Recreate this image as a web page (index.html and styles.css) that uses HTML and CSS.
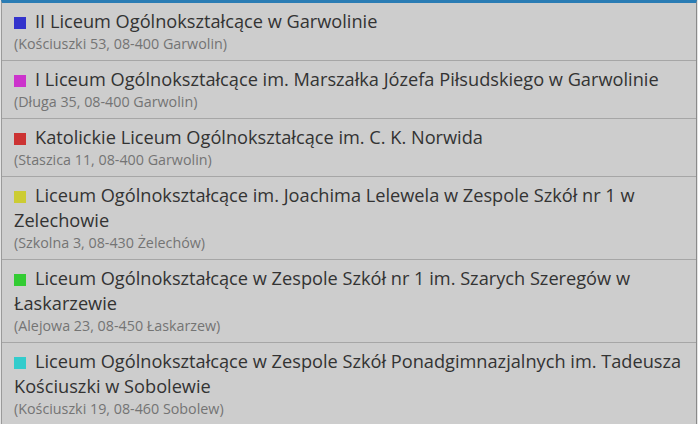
FILE: index.html
```html
<!DOCTYPE html>
<html lang="pl">
<head>
<meta charset="utf-8">
<link rel="stylesheet" href="styles.css">
</head>
<body>
<div class="list">
  <div class="item">
    <div class="title"><span class="sq c1"></span>II Liceum Ogólnokształcące w Garwolinie</div>
    <div class="addr">(Kościuszki 53, 08-400 Garwolin)</div>
  </div>
  <div class="item">
    <div class="title"><span class="sq c2"></span>I Liceum Ogólnokształcące im. Marszałka Józefa Piłsudskiego w Garwolinie</div>
    <div class="addr">(Długa 35, 08-400 Garwolin)</div>
  </div>
  <div class="item">
    <div class="title"><span class="sq c3"></span>Katolickie Liceum Ogólnokształcące im. C. K. Norwida</div>
    <div class="addr">(Staszica 11, 08-400 Garwolin)</div>
  </div>
  <div class="item">
    <div class="title"><span class="sq c4"></span>Liceum Ogólnokształcące im. Joachima Lelewela w Zespole Szkół nr 1 w Zelechowie</div>
    <div class="addr">(Szkolna 3, 08-430 Żelechów)</div>
  </div>
  <div class="item">
    <div class="title"><span class="sq c5"></span>Liceum Ogólnokształcące w Zespole Szkół nr 1 im. Szarych Szeregów w Łaskarzewie</div>
    <div class="addr">(Alejowa 23, 08-450 Łaskarzew)</div>
  </div>
  <div class="item">
    <div class="title"><span class="sq c6"></span>Liceum Ogólnokształcące w Zespole Szkół Ponadgimnazjalnych im. Tadeusza Kościuszki w Sobolewie</div>
    <div class="addr">(Kościuszki 19, 08-460 Sobolew)</div>
  </div>
</div>
</body>
</html>
```
FILE: styles.css
```css
html, body {
  margin: 0;
  padding: 0;
  background: #e4e4e4;
  height: 100%;
  overflow: hidden;
}
.list {
  margin-left: 1px;
  width: 694px;
  min-height: 100%;
  background: #cdcdcd;
  border-top: 3px solid #2a7cb4;
  border-left: 1px solid #9a9a9a;
  border-right: 1px solid #8a8a8a;
  font-family: "Open Sans", "Noto Sans", sans-serif;
}
.item {
  padding: 6px 12px 6px 12px;
  border-bottom: 1px solid #a6a6a6;
}
.title {
  font-size: 18.2px;
  line-height: 25px;
  color: #333;
}
.sq {
  display: inline-block;
  width: 12px;
  height: 12px;
  margin-right: 9px;
  vertical-align: -1px;
}
.c1 { background: #3333cc; }
.c2 { background: #cc33cc; }
.c3 { background: #cc3333; }
.c4 { background: #cccc33; }
.c5 { background: #33cc33; }
.c6 { background: #33cccc; }
.addr {
  font-size: 14.3px;
  line-height: 20px;
  color: #747474;
}
```
